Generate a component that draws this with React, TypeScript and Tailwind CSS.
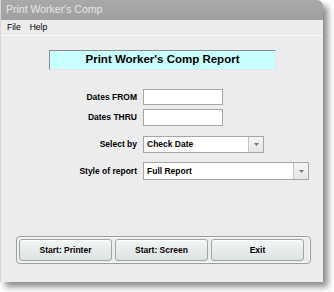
import React from "react";

const font = { fontFamily: '"Liberation Sans", Arial, sans-serif' };

const Combo = ({ value, width }: { value: string; width: string }) => (
  <div className={`flex h-full ${width} border border-[#a5a5a5] bg-white`}>
    <div className="flex flex-1 items-center pl-[3px] text-[8.5px] font-bold text-black">{value}</div>
    <div className="flex w-[15px] items-center justify-center border-l border-[#c4c4c4] bg-gradient-to-b from-[#f4f6f6] to-[#e2e6e7]">
      <svg width="5" height="3" viewBox="0 0 5 3">
        <path d="M0 0H5L2.5 3Z" fill="#7a7a7a" />
      </svg>
    </div>
  </div>
);

const Row = ({ label, mt, h, children }: { label: string; mt: string; h: string; children: React.ReactNode }) => (
  <div className={`flex items-center ${mt} ${h}`}>
    <div className="w-[136px] text-right text-[8.5px] font-bold text-black">{label}</div>
    <div className="ml-[6px] h-full">{children}</div>
  </div>
);

const Btn = ({ label }: { label: string }) => (
  <button className="h-[22px] w-[93px] rounded-[3px] border border-[#a2a6a7] bg-gradient-to-b from-[#f2f5f5] to-[#dce2e3] text-[8.5px] font-bold text-black shadow-[inset_0_1px_0_#ffffff]">
    {label}
  </button>
);

export default function App() {
  return (
    <div className="h-[292px] w-[334px] bg-white" style={font}>
      <div className="flex h-[282px] w-[323px] flex-col overflow-hidden rounded-tr-[6px] border-l border-[#d6d6d6] bg-[#ececec] shadow-[5px_5px_6px_rgba(0,0,0,0.45)]">
        <div className="flex h-[20px] items-center bg-gradient-to-b from-[#a9a9a9] to-[#a0a0a0] pl-[5px] text-[10.5px] text-[#e6e6e6]">
          Print Worker's Comp
        </div>
        <div className="flex h-[16px] items-center gap-[9px] border-b border-[#fafafa] pl-[6px] text-[8.5px] text-black">
          <span>File</span>
          <span>Help</span>
        </div>
        <div className="ml-[48px] mt-[14px] flex h-[20px] w-[227px] items-center justify-center border border-t-[#8c8c8c] border-l-[#8c8c8c] border-r-[#e6e6e6] border-b-[#e6e6e6] bg-[#c8ffff] text-[11.5px] font-bold text-black">
          Print Worker's Comp Report
        </div>
        <Row label="Dates FROM" mt="mt-[19px]" h="h-[16px]">
          <div className="h-full w-[80px] border border-[#a5a5a5] bg-white" />
        </Row>
        <Row label="Dates THRU" mt="mt-[4px]" h="h-[17px]">
          <div className="h-full w-[80px] border border-[#a5a5a5] bg-white" />
        </Row>
        <Row label="Select by" mt="mt-[10px]" h="h-[17px]">
          <Combo value="Check Date" width="w-[121px]" />
        </Row>
        <Row label="Style of report" mt="mt-[9px]" h="h-[18px]">
          <Combo value="Full Report" width="w-[166px]" />
        </Row>
        <div className="ml-[15px] mt-[56px] flex w-[295px] gap-[3px] rounded-[4px] border border-[#9c9c9c] px-[2px] py-[2px] shadow-[inset_0_0_0_1px_#f8f8f8]">
          <Btn label="Start: Printer" />
          <Btn label="Start: Screen" />
          <Btn label="Exit" />
        </div>
      </div>
    </div>
  );
}
